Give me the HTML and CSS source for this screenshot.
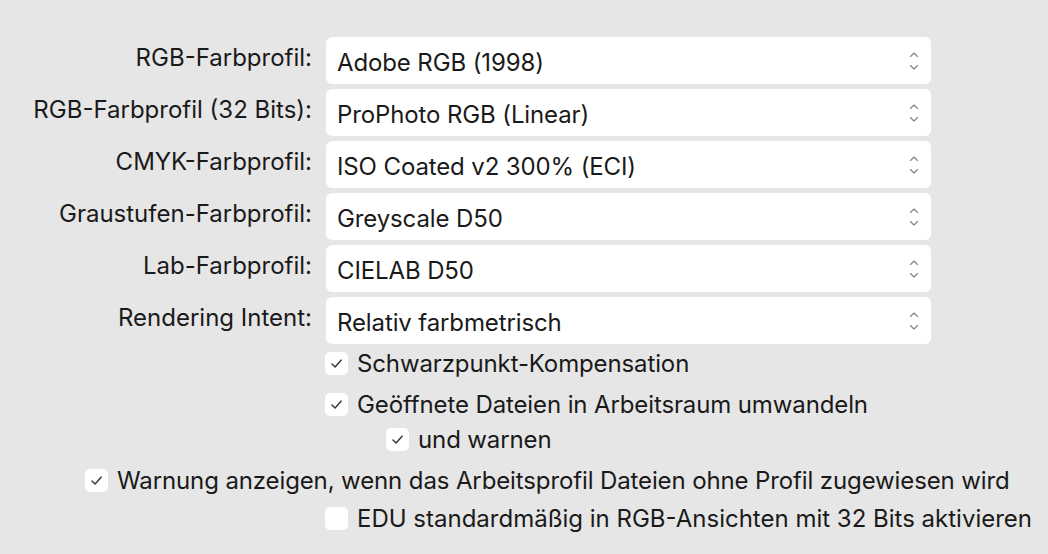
FILE: index.html
```html
<!DOCTYPE html>
<html lang="de">
<head>
<meta charset="utf-8">
<link rel="stylesheet" href="styles.css">
</head>
<body>
<div class="panel">
  <div class="form">
    <div class="label">RGB-Farbprofil:</div>
    <div class="popup"><span>Adobe RGB (1998)</span><svg class="chev" viewBox="0 0 10 20"><path d="M1.5 5.5 L5 2 L8.5 5.5 M1.5 14.5 L5 18 L8.5 14.5"/></svg></div>
    <div class="label">RGB-Farbprofil (32 Bits):</div>
    <div class="popup"><span>ProPhoto RGB (Linear)</span><svg class="chev" viewBox="0 0 10 20"><path d="M1.5 5.5 L5 2 L8.5 5.5 M1.5 14.5 L5 18 L8.5 14.5"/></svg></div>
    <div class="label">CMYK-Farbprofil:</div>
    <div class="popup"><span>ISO Coated v2 300% (ECI)</span><svg class="chev" viewBox="0 0 10 20"><path d="M1.5 5.5 L5 2 L8.5 5.5 M1.5 14.5 L5 18 L8.5 14.5"/></svg></div>
    <div class="label">Graustufen-Farbprofil:</div>
    <div class="popup"><span>Greyscale D50</span><svg class="chev" viewBox="0 0 10 20"><path d="M1.5 5.5 L5 2 L8.5 5.5 M1.5 14.5 L5 18 L8.5 14.5"/></svg></div>
    <div class="label">Lab-Farbprofil:</div>
    <div class="popup"><span>CIELAB D50</span><svg class="chev" viewBox="0 0 10 20"><path d="M1.5 5.5 L5 2 L8.5 5.5 M1.5 14.5 L5 18 L8.5 14.5"/></svg></div>
    <div class="label">Rendering Intent:</div>
    <div class="popup"><span>Relativ farbmetrisch</span><svg class="chev" viewBox="0 0 10 20"><path d="M1.5 5.5 L5 2 L8.5 5.5 M1.5 14.5 L5 18 L8.5 14.5"/></svg></div>
  </div>
  <div class="checks">
    <div class="check indent1 r1"><span class="box"><svg viewBox="0 0 12 12"><path d="M1.8 6.4 L4.7 9.2 L10.2 2.9"/></svg></span><span>Schwarzpunkt-Kompensation</span></div>
    <div class="check indent1 r2"><span class="box"><svg viewBox="0 0 12 12"><path d="M1.8 6.4 L4.7 9.2 L10.2 2.9"/></svg></span><span>Geöffnete Dateien in Arbeitsraum umwandeln</span></div>
    <div class="check indent2 r3"><span class="box"><svg viewBox="0 0 12 12"><path d="M1.8 6.4 L4.7 9.2 L10.2 2.9"/></svg></span><span>und warnen</span></div>
    <div class="check indent0 r4"><span class="box"><svg viewBox="0 0 12 12"><path d="M1.8 6.4 L4.7 9.2 L10.2 2.9"/></svg></span><span>Warnung anzeigen, wenn das Arbeitsprofil Dateien ohne Profil zugewiesen wird</span></div>
    <div class="check indent1 r5"><span class="box"></span><span class="wide">EDU standardmäßig in RGB-Ansichten mit 32 Bits aktivieren</span></div>
  </div>
</div>
</body>
</html>
```

FILE: styles.css
```css
html, body {
  margin: 0;
  padding: 0;
  background: #e6e6e6;
}
body {
  width: 1048px;
  height: 554px;
  overflow: hidden;
  font-family: Inter, "Noto Sans", "Liberation Sans", sans-serif;
  font-size: 24px;
  letter-spacing: -0.12px;
  color: #1a1a1a;
}
.panel {
  padding-top: 37px;
}
.form {
  display: grid;
  grid-template-columns: 312px 605px;
  column-gap: 14px;
  row-gap: 5px;
}
.label {
  text-align: right;
  align-self: center;
  padding-bottom: 7px;
  white-space: nowrap;
  letter-spacing: 0;
}
.popup {
  height: 47px;
  background: #ffffff;
  border-radius: 6px;
  display: flex;
  align-items: center;
  justify-content: space-between;
  padding: 3px 12px 0 11px;
  box-sizing: border-box;
}
.chev {
  width: 10px;
  height: 20px;
  fill: none;
  stroke: #808080;
  stroke-width: 1.1;
  stroke-linecap: round;
  stroke-linejoin: round;
  margin-top: -3px;
}
.checks {
  display: flex;
  flex-direction: column;
}
.check {
  display: flex;
  align-items: center;
  gap: 9px;
  height: 23px;
  white-space: nowrap;
}
.wide { letter-spacing: 0; }
.indent0 { padding-left: 85px; }
.indent1 { padding-left: 325px; }
.indent2 { padding-left: 386px; }
.r1 { margin-top: 8px; }
.r2 { margin-top: 18px; }
.r3 { margin-top: 12px; }
.r4 { margin-top: 18px; }
.r5 { margin-top: 15px; }
.box {
  width: 23px;
  height: 23px;
  background: #ffffff;
  border-radius: 5px;
  display: flex;
  align-items: center;
  justify-content: center;
  flex: none;
}
.box svg {
  width: 13px;
  height: 13px;
  fill: none;
  stroke: #3a3a3a;
  stroke-width: 1.4;
  stroke-linecap: round;
  stroke-linejoin: round;
}
```
